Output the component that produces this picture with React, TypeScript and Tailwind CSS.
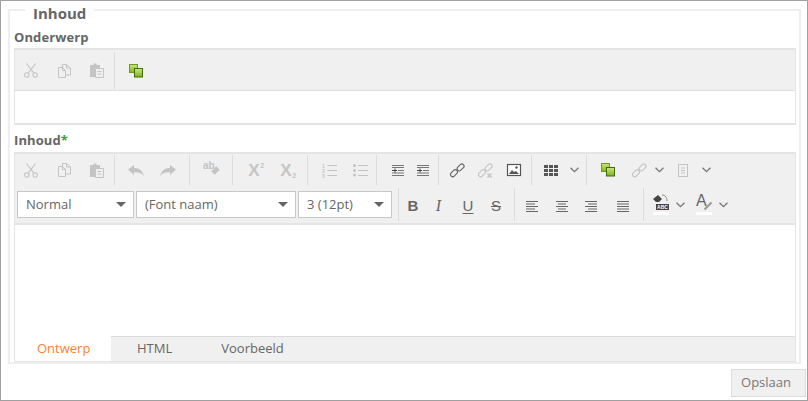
import type { ReactNode } from "react";

const faint = "#c4c4c4";
const dark = "#666666";

const Btn = ({ w, children }: { w: string; children: ReactNode }) => (
    <div className={`${w} h-full shrink-0 flex items-center justify-center`}>{children}</div>
);

const Sep = ({ m, h = "h-[30px]" }: { m: string; h?: string }) => (
    <div className={`${m} ${h} w-px shrink-0 bg-[#dcdcdc]`} />
);

const Ico = ({ w = 16, h = 16, children }: { w?: number; h?: number; children: ReactNode }) => (
    <svg width={w} height={h} viewBox={`0 0 ${w} ${h}`} className="shrink-0 overflow-visible">{children}</svg>
);

const Cut = () => (
    <Ico w={14} h={15}>
        <g fill="none" stroke={faint} strokeWidth="1.1">
            <circle cx="2.8" cy="12" r="2.2" />
            <circle cx="11.2" cy="12" r="2.2" />
            <path d="M4.2 10.2 11.5 .5M9.8 10.2 2.5 .5" />
        </g>
    </Ico>
);

const Copy = () => (
    <Ico w={13} h={14}>
        <g fill="#f0f0f0" stroke={faint}>
            <path d="M4.5.5h4l4 3.5v7h-8z" />
            <path d="M.5 3.5h4l3 3v7h-7z" />
            <path d="M4.5 3.5v3h3M8.5.5v3.5h4" fill="none" />
        </g>
    </Ico>
);

const Paste = () => (
    <Ico w={14} h={15}>
        <path d="M0 2h3.5V.5h3V2H10v3.5H5.5V14H0z" fill={faint} />
        <path d="M5.5 5.5h8v9h-8z" fill="#f0f0f0" stroke={faint} />
        <path d="M7.5 8.5h4M7.5 11h4" stroke={faint} />
    </Ico>
);

const Undo = ({ flip }: { flip?: boolean }) => (
    <Ico w={16} h={11}>
        <path
            d="M0 4.5 6 0v3c5 0 8.5 2.4 10 8-1.8-2.6-5-4-10-3.8V10z"
            fill={faint}
            transform={flip ? "matrix(-1 0 0 1 16 0)" : undefined}
        />
    </Ico>
);

const Spell = () => (
    <div className="relative w-4 h-4 text-[10px] leading-[10px] text-[#c4c4c4] font-['Liberation_Sans',sans-serif] font-bold">
        <span className="absolute left-0 -top-px">ab</span>
        <div className="absolute left-[9px] top-[6px] w-[7px] h-[5px] bg-[#c4c4c4] -rotate-45" />
    </div>
);

const Lines = ({ rows }: { rows: [number, number][] }) => (
    <Ico w={12} h={11}>
        {rows.map(([x1, x2], i) => (
            <rect key={i} x={x1} y={i * 2.5} width={x2 - x1} height="1" fill={dark} />
        ))}
    </Ico>
);

const Ol = () => (
    <Ico w={15} h={14}>
        <text x="0" y="5" fontSize="5" fill={faint} fontFamily="Liberation Sans" fontWeight="bold">1</text>
        <text x="0" y="10" fontSize="5" fill={faint} fontFamily="Liberation Sans" fontWeight="bold">2</text>
        <text x="0" y="14.5" fontSize="5" fill={faint} fontFamily="Liberation Sans" fontWeight="bold">3</text>
        <path d="M5.5 2.5H15M5.5 7.5H15M5.5 12.5H15" stroke={faint} />
    </Ico>
);

const Ul = () => (
    <Ico w={15} h={14}>
        <circle cx="1.5" cy="2.5" r="1.5" fill={faint} />
        <circle cx="1.5" cy="7.5" r="1.5" fill={faint} />
        <circle cx="1.5" cy="12" r="1.5" fill={faint} />
        <path d="M5 2.5H15M5 7.5H15M5 12.5H15" stroke={faint} />
    </Ico>
);

const Indent = () => (
    <Ico w={12} h={11}>
        <path d="M0 .5h12M0 2.5h12M6 5.5h6M0 8h12M0 10.5h12" stroke="#777" />
        <path d="M0 5.5h5M3 3.5v4" stroke="#444" />
    </Ico>
);

const Link = ({ color, cross }: { color: string; cross?: boolean }) => (
    <Ico w={15} h={15}>
        <g fill="none" stroke={color} strokeWidth="1.1">
            <rect x="0" y="8" width="8" height="4.4" rx="2.2" transform="rotate(-45 4 10.2)" />
            <rect x="6.6" y="2.2" width="8" height="4.4" rx="2.2" transform="rotate(-45 10.6 4.4)" />
        </g>
        {cross && <path d="M9.5 10.5l4 4M13.5 10.5l-4 4" stroke={color} strokeWidth="1.6" />}
    </Ico>
);

const Picture = () => (
    <Ico w={14} h={12}>
        <rect x=".5" y=".5" width="13" height="11" fill="#fff" stroke="#555" strokeWidth="1.2" />
        <path d="M2 10l3-4 2 2 2-1 3 3z" fill="#555" />
        <circle cx="9.5" cy="3.5" r="1.2" fill="#555" />
    </Ico>
);

const Table = () => (
    <div className="grid grid-cols-3 gap-px w-[14px]">
        {Array.from({ length: 9 }).map((_, i) => (
            <div key={i} className="h-[3px] bg-[#555] w-1" />
        ))}
    </div>
);

const Chevron = () => (
    <Ico w={9} h={6}>
        <path d="M.5.7 4.5 4.7 8.5.7" fill="none" stroke="#777" strokeWidth="1.3" />
    </Ico>
);

const Green = ({ id }: { id: string }) => (
    <Ico w={14} h={14}>
        <defs>
            <linearGradient id={id} x1="0" y1="0" x2="0" y2="1">
                <stop offset="0" stopColor="#cde67c" />
                <stop offset="1" stopColor="#7fb21f" />
            </linearGradient>
        </defs>
        <rect x=".5" y=".5" width="8" height="8" fill={`url(#${id})`} stroke="#6c9a22" />
        <rect x="5.5" y="4.5" width="8" height="8.5" fill={`url(#${id})`} stroke="#3f6a10" />
    </Ico>
);

const Doc = () => (
    <Ico w={10} h={13}>
        <rect x=".5" y=".5" width="9" height="12" fill="none" stroke={faint} />
        <path d="M3 4h4M3 6.5h4M3 9h4" stroke={faint} />
    </Ico>
);

const Select = ({ w, label }: { w: string; label: string }) => (
    <div className={`${w} h-[27px] shrink-0 bg-white border border-[#c8c8c8] flex items-center justify-between pl-[8px] pr-[7px] text-[13px] text-[#666]`}>
        <span className="pt-[1px]">{label}</span>
        <div className="w-0 h-0 border-x-[5px] border-x-transparent border-t-[5px] border-t-[#666]" />
    </div>
);

const Letter = ({ children, className }: { children: ReactNode; className: string }) => (
    <span className={`mt-[2px] text-[15px] leading-none text-[#666] ${className}`}>{children}</span>
);

const Script = ({ sub, mark }: { sub?: boolean; mark: string }) => (
    <div className="relative font-['Liberation_Sans',sans-serif] font-bold text-[17px] leading-none text-[#c4c4c4]">
        X
        <span className={`absolute left-[12px] text-[7px] leading-none ${sub ? "bottom-0" : "top-0"}`}>{mark}</span>
    </div>
);

const BgColor = () => (
    <div className="relative w-4 h-[21px]">
        <svg width="16" height="10" viewBox="0 0 16 10" className="absolute left-0 top-0">
            <path d="M0 5 5 1l4 4-3 3H3z" fill="#444" />
            <path d="M9 1c3 0 5 2 5 6" fill="none" stroke="#888" />
        </svg>
        <div className="absolute left-[3px] top-[10px] w-[13px] h-[6px] bg-[#444] text-[5px] leading-[6px] text-white text-center font-bold font-['Liberation_Sans',sans-serif]">ABC</div>
        <div className="absolute left-0 bottom-0 w-4 h-[3px] bg-white" />
    </div>
);

const FontColor = () => (
    <div className="relative w-4 h-[21px]">
        <span className="absolute left-0 -top-[2px] text-[16px] leading-[18px] text-[#666] font-['Liberation_Sans',sans-serif]">A</span>
        <div className="absolute left-[7px] top-[11px] w-[10px] h-[2px] bg-[#999] -rotate-45" />
        <div className="absolute left-0 bottom-0 w-4 h-[3px] bg-white" />
    </div>
);

const Label = ({ children }: { children: ReactNode }) => (
    <div className="text-[13px] leading-[18px] font-bold text-[#666] tracking-[0.1px]">{children}</div>
);

export default function App() {
    return (
        <div className="w-[808px] h-[401px] overflow-hidden border border-[#a0a0a0] bg-white font-['Open_Sans',sans-serif] flex flex-col">
            <fieldset className="-mt-[3px] ml-[7px] w-[793px] h-[366px] shrink-0 border-2 border-[#eeeeee] min-w-0">
                <legend className="ml-[15px] px-[8px] pt-[6px] text-[15px] leading-[18px] font-bold text-[#666]">Inhoud</legend>
                <div className="ml-[4px] w-[782px]">
                    <div className="mt-[6px]">
                        <Label>Onderwerp</Label>
                    </div>

                    <div className="mt-[2px] border-x border-y-2 border-[#e4e4e4]">
                        <div className="h-[41px] pt-[1px] bg-[#f0f0f0] border-b border-[#e0e0e0] flex items-center">
                            <Btn w="w-[32px]"><Cut /></Btn>
                            <Btn w="w-[34px]"><Copy /></Btn>
                            <Btn w="w-[32px]"><Paste /></Btn>
                            <Sep m="ml-px mr-[5px]" h="h-[37px]" />
                            <Btn w="w-[32px]"><Green id="g1" /></Btn>
                        </div>
                        <div className="h-[32px] bg-white" />
                    </div>

                    <div className="mt-[6px]">
                        <Label>Inhoud<span className="text-[#3f9a3f]">*</span></Label>
                    </div>

                    <div className="mt-[3px] border-x border-t-2 border-b border-[#e4e4e4]">
                        <div className="bg-[#f0f0f0] border-b-2 border-[#e4e4e4]">
                            <div className="h-[30px] pt-[1px] box-content flex items-center">
                                <Btn w="w-[32px]"><Cut /></Btn>
                                <Btn w="w-[34px]"><Copy /></Btn>
                                <Btn w="w-[32px]"><Paste /></Btn>
                                <Sep m="ml-px mr-[5px]" />
                                <Btn w="w-[32px]"><Undo /></Btn>
                                <Btn w="w-[32px]"><Undo flip /></Btn>
                                <Sep m="mx-[5px]" />
                                <Btn w="w-[32px]"><Spell /></Btn>
                                <Sep m="mx-[5px]" />
                                <Btn w="w-[32px]"><Script mark="2" /></Btn>
                                <Btn w="w-[32px]"><Script sub mark="2" /></Btn>
                                <Sep m="mx-[5px]" />
                                <Btn w="w-[32px]"><Ol /></Btn>
                                <Btn w="w-[31px]"><Ul /></Btn>
                                <Sep m="mr-[5px]" />
                                <Btn w="w-[32px]"><Indent /></Btn>
                                <Btn w="w-[18px]"><Indent /></Btn>
                                <Sep m="ml-[6px] mr-[5px]" />
                                <Btn w="w-[26px]"><Link color="#666" /></Btn>
                                <Btn w="w-[30px]"><Link color={faint} cross /></Btn>
                                <Btn w="w-[28px]"><Picture /></Btn>
                                <Sep m="ml-[3px] mr-[5px]" />
                                <Btn w="w-[28px]"><Table /></Btn>
                                <Btn w="w-[18px]"><Chevron /></Btn>
                                <Sep m="ml-[3px] mr-[5px]" />
                                <Btn w="w-[32px]"><Green id="g2" /></Btn>
                                <Btn w="w-[30px]"><Link color={faint} /></Btn>
                                <Btn w="w-[10px]"><Chevron /></Btn>
                                <Btn w="w-[38px]"><Doc /></Btn>
                                <Btn w="w-[8px]"><Chevron /></Btn>
                            </div>
                            <div className="h-[33px] mt-[3px] mb-[2px] pl-[2px] flex items-center">
                                <Select w="w-[117px]" label="Normal" />
                                <div className="ml-[2px]"><Select w="w-[160px]" label="(Font naam)" /></div>
                                <div className="ml-[2px]"><Select w="w-[94px]" label="3 (12pt)" /></div>
                                <Sep m="ml-[6px]" h="h-[33px]" />
                                <Btn w="w-[28px]"><Letter className="font-['Liberation_Sans',sans-serif] font-bold">B</Letter></Btn>
                                <Btn w="w-[23px]"><Letter className="font-['Liberation_Serif',serif] italic text-[16px]">I</Letter></Btn>
                                <Btn w="w-[36px]"><Letter className="font-['Liberation_Sans',sans-serif] underline underline-offset-2">U</Letter></Btn>
                                <Btn w="w-[20px]"><Letter className="font-['Liberation_Sans',sans-serif] line-through">S</Letter></Btn>
                                <Sep m="ml-[8px]" h="h-[33px]" />
                                <Btn w="w-[34px]"><div className="mt-[3px]"><Lines rows={[[0, 12], [0, 9], [0, 12], [0, 9], [0, 12]]} /></div></Btn>
                                <Btn w="w-[26px]"><div className="mt-[3px]"><Lines rows={[[0, 12], [2, 10], [0, 12], [2, 10], [0, 12]]} /></div></Btn>
                                <Btn w="w-[32px]"><div className="mt-[3px]"><Lines rows={[[0, 12], [3, 12], [0, 12], [3, 12], [0, 12]]} /></div></Btn>
                                <Btn w="w-[32px]"><div className="mt-[3px]"><Lines rows={[[0, 12], [0, 12], [0, 12], [0, 12], [0, 12]]} /></div></Btn>
                                <Sep m="ml-[4px] mr-[9px]" h="h-[33px]" />
                                <Btn w="w-[16px]"><BgColor /></Btn>
                                <div className="ml-[3px] h-full"><Btn w="w-[16px]"><Chevron /></Btn></div>
                                <div className="ml-[8px] h-full"><Btn w="w-[16px]"><FontColor /></Btn></div>
                                <div className="ml-[3px] h-full"><Btn w="w-[16px]"><Chevron /></Btn></div>
                            </div>
                        </div>
                        <div className="h-[111px] bg-white" />
                        <div className="h-[25px] flex bg-[#f0f0f0] text-[13px] text-[#666]">
                            <div className="w-[96px] bg-white pl-[22px] pt-[3px] text-[#ff7f2e]">Ontwerp</div>
                            <div className="flex-1 flex border-t border-[#dcdcdc]">
                                <div className="ml-[26px] pt-[2px]">HTML</div>
                                <div className="ml-[49px] pt-[2px]">Voorbeeld</div>
                            </div>
                        </div>
                    </div>
                </div>
            </fieldset>
            <div className="mt-[5px] mr-px flex justify-end">
                <button className="w-[75px] h-[28px] pr-[5px] bg-[#f0f0f0] border border-[#dcdcdc] text-[13px] text-[#777]">Opslaan</button>
            </div>
        </div>
    );
}
